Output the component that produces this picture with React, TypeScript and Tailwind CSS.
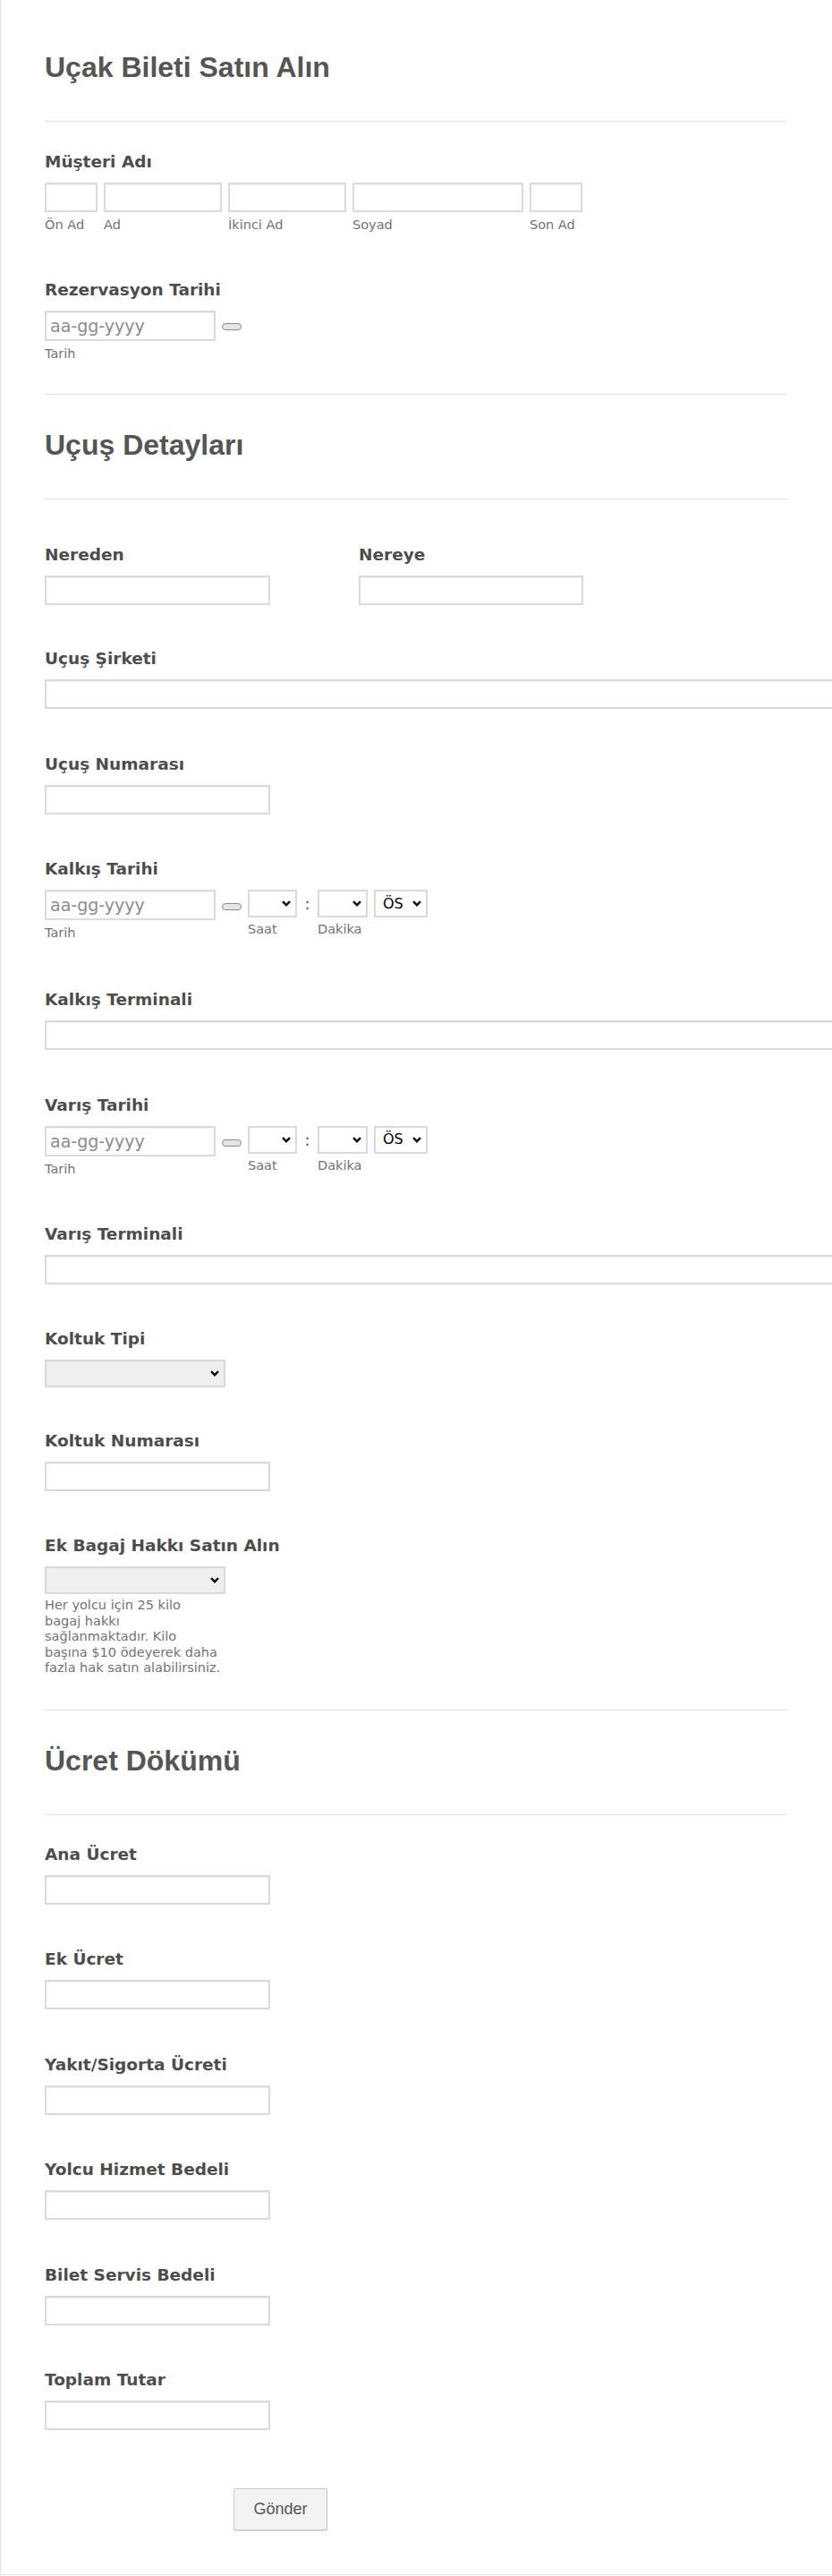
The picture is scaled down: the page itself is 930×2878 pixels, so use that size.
import type { ReactNode } from "react";

/* ─── küçük parçalar ─── */

function Label({ children }: { children: ReactNode }) {
  return (
    <label className="block h-[24px] whitespace-nowrap text-[18.5px] font-bold leading-[24px] text-[#4d4d4d]">
      {children}
    </label>
  );
}

function Sub({ children, className = "" }: { children: ReactNode; className?: string }) {
  return <span className={`block h-[18px] text-[14.5px] leading-[18px] text-[#737373] ${className}`}>{children}</span>;
}

function Field({ label, className = "", children }: { label: string; className?: string; children: ReactNode }) {
  return (
    <div className={className}>
      <Label>{label}</Label>
      <div className="mt-[11px]">{children}</div>
    </div>
  );
}

const box =
  "block border-2 border-[#dadada] bg-white shadow-[inset_0_1px_1px_rgba(0,0,0,0.06)] outline-none";

function TextBox({ className = "w-[252px]" }: { className?: string }) {
  return <input type="text" className={`${box} h-[33px] ${className}`} />;
}

function Chevron() {
  return (
    <svg viewBox="0 0 10 7" className="h-[7px] w-[10px]">
      <path d="M1 1.2l4 4 4-4" fill="none" stroke="#111" strokeWidth="2.4" />
    </svg>
  );
}

function Select({ className = "", text, grey = false }: { className?: string; text?: string; grey?: boolean }) {
  return (
    <div
      className={`flex h-[31px] items-center border-2 border-[#dadada] pr-[5px] ${
        grey ? "bg-[#efefef]" : "bg-white"
      } ${className}`}
    >
      <span className="flex-1 pl-[8px] text-[16px] leading-none text-black">{text}</span>
      <Chevron />
    </div>
  );
}

function Pill({ className = "" }: { className?: string }) {
  return <span className={`block h-[8px] w-[22px] shrink-0 rounded-[4px] border border-[#8a8a8a] bg-[#e6e6e6] ${className}`} />;
}

function DateInput() {
  return (
    <div className="flex flex-col">
      <input
        type="text"
        placeholder="aa-gg-yyyy"
        className={`${box} h-[34px] w-[191px] px-[4px] text-[19px] text-[#555] placeholder:text-[#8c8c8c]`}
      />
      <Sub className="mt-[5px]">Tarih</Sub>
    </div>
  );
}

function DateTime() {
  return (
    <div className="flex items-start">
      <DateInput />
      <Pill className="ml-[7px] mt-[15px]" />
      <div className="ml-[7px] flex flex-col">
        <Select className="w-[55px]" />
        <Sub className="mt-[4px]">Saat</Sub>
      </div>
      <span className="flex h-[31px] w-[23px] items-center justify-center text-[18px] text-[#555]">:</span>
      <div className="flex flex-col">
        <Select className="w-[56px]" />
        <Sub className="mt-[4px]">Dakika</Sub>
      </div>
      <Select className="ml-[7px] w-[60px]" text="ÖS" />
    </div>
  );
}

function Heading({ children, className = "" }: { children: ReactNode; className?: string }) {
  return (
    <h1
      className={`h-[38px] font-['Liberation_Sans',Arial,sans-serif] text-[32px] font-bold leading-[38px] text-[#555] ${className}`}
    >
      {children}
    </h1>
  );
}

function Rule({ className = "" }: { className?: string }) {
  return <div className={`h-px w-[830px] bg-[#e3e3e3] ${className}`} />;
}

const names = [
  { w: "w-[59px]", t: "Ön Ad" },
  { w: "w-[132px]", t: "Ad" },
  { w: "w-[132px]", t: "İkinci Ad" },
  { w: "w-[191px]", t: "Soyad" },
  { w: "w-[59px]", t: "Son Ad" },
];

const fees = ["Ek Ücret", "Yakıt/Sigorta Ücreti", "Yolcu Hizmet Bedeli", "Bilet Servis Bedeli", "Toplam Tutar"];

export default function App() {
  return (
    <div className="w-full overflow-hidden bg-white font-['DejaVu_Sans',Verdana,sans-serif]">
      <div className="border-b border-l border-[#e2e2e2] pb-[49px] pl-[49px] pt-[56px]">
        {/* başlık */}
        <Heading>Uçak Bileti Satın Alın</Heading>
        <Rule className="mt-[41px]" />

        <Field label="Müşteri Adı" className="mt-[33px]">
          <div className="flex gap-[7px]">
            {names.map((n) => (
              <div key={n.t} className="flex flex-col">
                <input type="text" className={`${box} h-[33px] ${n.w}`} />
                <Sub className="mt-[5px]">{n.t}</Sub>
              </div>
            ))}
          </div>
        </Field>

        <Field label="Rezervasyon Tarihi" className="mt-[52px]">
          <div className="flex items-start">
            <DateInput />
            <Pill className="ml-[7px] mt-[14px]" />
          </div>
        </Field>

        <Rule className="mt-[36px]" />

        {/* uçuş detayları */}
        <Heading className="mt-[37px]">Uçuş Detayları</Heading>
        <Rule className="mt-[41px]" />

        <div className="mt-[50px] flex">
          <Field label="Nereden" className="w-[351px]">
            <TextBox />
          </Field>
          <Field label="Nereye">
            <TextBox className="w-[251px]" />
          </Field>
        </div>

        <Field label="Uçuş Şirketi" className="mt-[48px]">
          <TextBox className="w-[900px]" />
        </Field>
        <Field label="Uçuş Numarası" className="mt-[49.5px]">
          <TextBox />
        </Field>
        <Field label="Kalkış Tarihi" className="mt-[49.5px]">
          <DateTime />
        </Field>
        <Field label="Kalkış Terminali" className="mt-[54px]">
          <TextBox className="w-[900px]" />
        </Field>
        <Field label="Varış Tarihi" className="mt-[49.5px]">
          <DateTime />
        </Field>
        <Field label="Varış Terminali" className="mt-[52px]">
          <TextBox className="w-[900px]" />
        </Field>
        <Field label="Koltuk Tipi" className="mt-[49.5px]">
          <Select grey className="w-[202px]" />
        </Field>
        <Field label="Koltuk Numarası" className="mt-[48px]">
          <TextBox />
        </Field>
        <Field label="Ek Bagaj Hakkı Satın Alın" className="mt-[49px]">
          <Select grey className="w-[202px]" />
          <p className="mt-[4px] text-[14.5px] leading-[17.5px] text-[#737373]">
            Her yolcu için 25 kilo
            <br />
            bagaj hakkı
            <br />
            sağlanmaktadır. Kilo
            <br />
            başına $10 ödeyerek daha
            <br />
            fazla hak satın alabilirsiniz.
          </p>
        </Field>

        <Rule className="mt-[37px]" />

        {/* ücret dökümü */}
        <Heading className="mt-[37px]">Ücret Dökümü</Heading>
        <Rule className="mt-[41px]" />

        <Field label="Ana Ücret" className="mt-[32px]">
          <TextBox />
        </Field>
        {fees.map((f) => (
          <Field key={f} label={f} className="mt-[49.5px]">
            <TextBox />
          </Field>
        ))}

        <button
          type="button"
          className="ml-[211px] mt-[65px] h-[47px] w-[105px] rounded-[2px] border border-[#c9c9c9] bg-[#f3f3f3] font-['Liberation_Sans',Arial,sans-serif] text-[18px] text-[#555] shadow-[0_1px_1px_rgba(0,0,0,0.15)]"
        >
          Gönder
        </button>
      </div>
    </div>
  );
}
